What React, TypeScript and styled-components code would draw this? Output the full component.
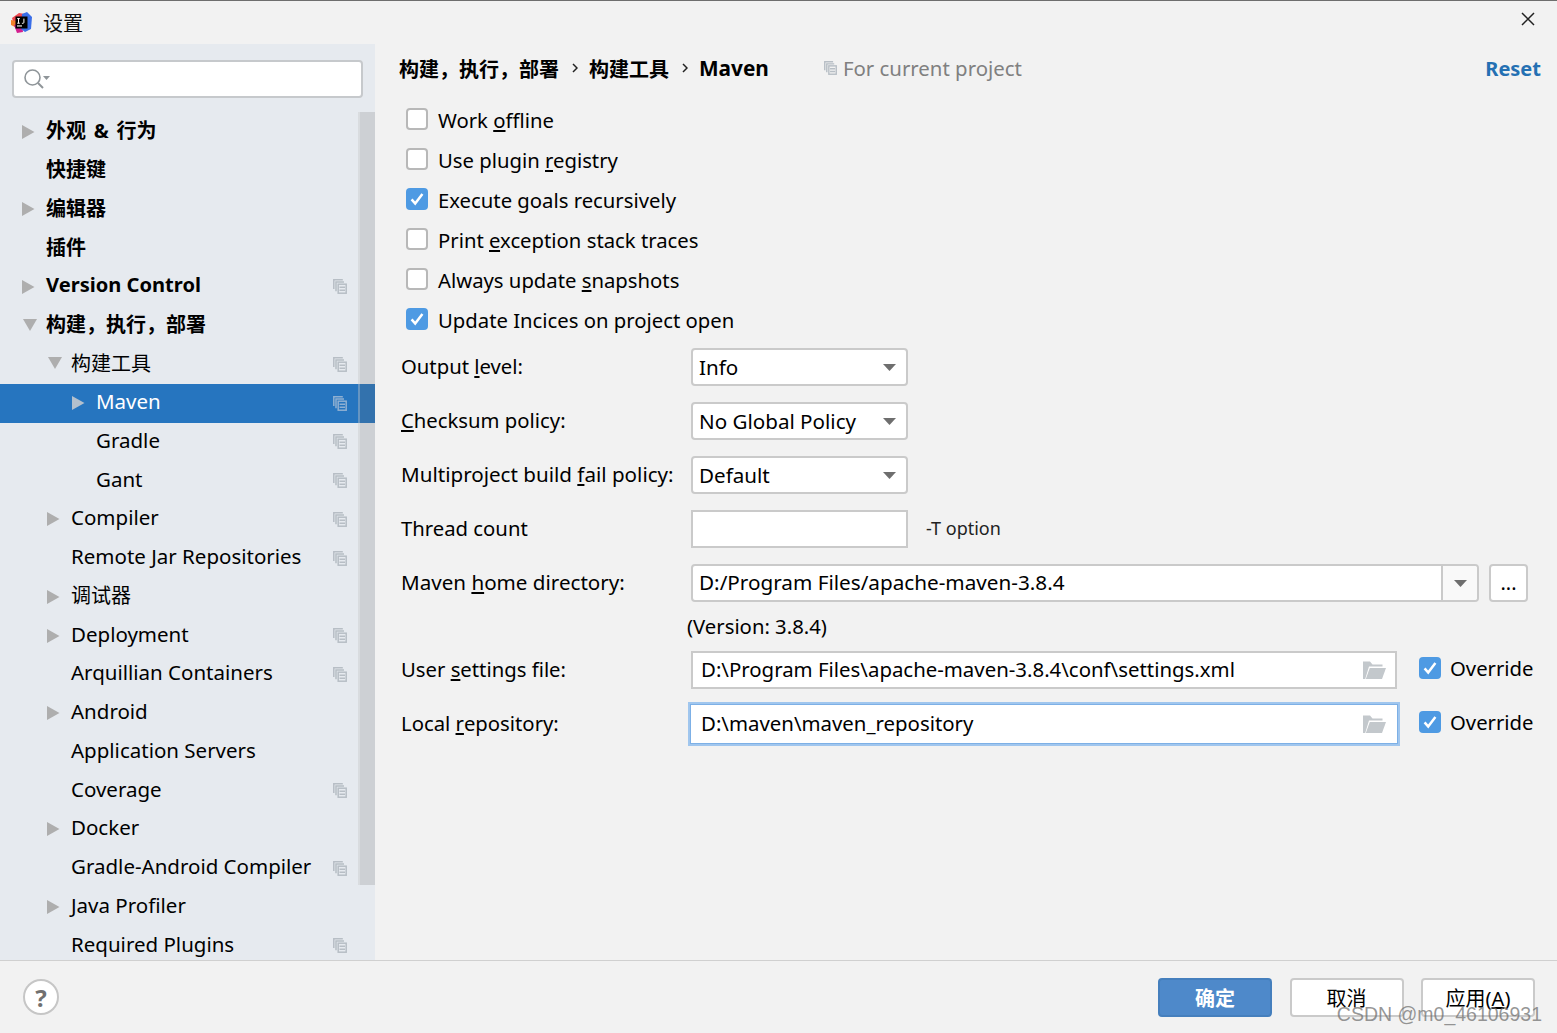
import React from "react";
import styled, { createGlobalStyle } from "styled-components";

const FONT = `"Noto Sans", "Noto Sans CJK SC", sans-serif`;

const Global = createGlobalStyle`
  html, body { margin: 0; padding: 0; height: 1033px; overflow: hidden; background: #f2f2f2; }
  * { box-sizing: border-box; }
  body { font-family: ${FONT}; color: #000; }
`;

const Window = styled.div`
  position: relative;
  width: 1557px;
  height: 1033px;
  display: flex;
  flex-direction: column;
  background: #f2f2f2;
  border-top: 1px solid #6e6e6e;
  overflow: hidden;
  font-size: 20.3px;
`;

const TitleBar = styled.div`
  height: 43px;
  flex: none;
  display: flex;
  align-items: center;
  padding: 0 22px 0 11px;
`;
const TitleText = styled.span`
  margin-left: 11px;
  font-size: 20px;
  color: #111;
`;
const CloseButton = styled.span`
  margin-left: auto;
  display: flex;
  margin-bottom: 8px;
`;

const Body = styled.div`
  flex: 1;
  min-height: 0;
  display: flex;
`;

const Sidebar = styled.aside`
  position: relative;
  width: 375px;
  flex: none;
  background: #e6eaef;
  padding-top: 16px;
  overflow: hidden;
  display: flex;
  flex-direction: column;
`;
const SearchBox = styled.div`
  flex: none;
  margin: 0 12px 14.6px;
  height: 38px;
  background: #fff;
  border: 2px solid #c6c9cc;
  border-radius: 4px;
  display: flex;
  align-items: center;
  padding-left: 9px;
`;
const Tree = styled.div`
  display: flex;
  flex-direction: column;
`;
const Row = styled.div<{ $depth: number; $selected?: boolean; $bold?: boolean; $cjk?: boolean }>`
  height: 38.75px;
  flex: none;
  display: flex;
  align-items: center;
  padding-left: ${(p) => 22 + p.$depth * 25}px;
  padding-right: 28px;
  background: ${(p) => (p.$selected ? "#2675bf" : "transparent")};
  color: ${(p) => (p.$selected ? "#fff" : "#000")};
  font-weight: ${(p) => (p.$bold ? 700 : 400)};
  font-size: ${(p) => (p.$cjk ? 20 : p.$bold ? 20.1 : 20.5)}px;
  word-spacing: ${(p) => (p.$cjk ? 2.5 : 0)}px;
  white-space: nowrap;
`;
const ArrowSlot = styled.span`
  width: 24px;
  flex: none;
  display: flex;
  align-items: center;
`;
const RowLabel = styled.span`
  flex: 1;
  min-width: 0;
  padding-bottom: 4px;
`;
const Scrollbar = styled.div`
  position: absolute;
  right: 0;
  top: 68px;
  width: 17px;
  height: 773px;
  background: rgba(105, 105, 105, 0.2);
  border-left: 2px solid rgba(255, 255, 255, 0.25);
`;

const Main = styled.main`
  flex: 1;
  min-width: 0;
  padding: 0 16px 0 24px;
  display: flex;
  flex-direction: column;
`;
const Breadcrumb = styled.div`
  height: 48px;
  flex: none;
  display: flex;
  align-items: center;
  font-weight: 700;
  font-size: 20px;
`;
const CrumbSep = styled.span`
  display: flex;
  margin: 0 11px 0 13px;
`;
const CrumbLeaf = styled.span`
  font-size: 20.8px;
`;
const ProjectHint = styled.span`
  margin-left: 55px;
  display: flex;
  align-items: center;
  gap: 6px;
  font-weight: 400;
  font-size: 20.4px;
  color: #808080;
`;
const ResetLink = styled.span`
  margin-left: auto;
  color: #2470b3;
  font-weight: 700;
  font-size: 20px;
`;

const Options = styled.div`
  flex: none;
  margin-top: 7px;
  padding-left: 7px;
  display: flex;
  flex-direction: column;
`;
const OptionRow = styled.label`
  height: 40px;
  display: flex;
  align-items: center;
  gap: 10px;
`;
const OptionText = styled.span`
  padding-top: 2px;
`;
const Box = styled.span<{ $checked?: boolean }>`
  width: 22px;
  height: 22px;
  flex: none;
  border-radius: 4px;
  display: flex;
  align-items: center;
  justify-content: center;
  background: ${(p) => (p.$checked ? "#4e9ae3" : "#fff")};
  border: ${(p) => (p.$checked ? "none" : "2px solid #b8b8b8")};
`;

const Form = styled.div`
  margin-top: 1px;
  padding-left: 2px;
  display: grid;
  grid-template-columns: 290px 1fr;
  align-items: center;
`;
const FormLabel = styled.span<{ $wide?: boolean }>`
  height: 54px;
  display: flex;
  align-items: center;
  white-space: pre;
  padding-bottom: 2px;
  font-size: ${(p) => (p.$wide ? 20.6 : 20.3)}px;
`;
const FormCell = styled.div`
  height: 54px;
  display: flex;
  align-items: center;
`;
const VersionCell = styled.div`
  grid-column: 2;
  height: 33px;
  margin-left: -4px;
  padding-bottom: 2px;
  display: flex;
  align-items: center;
`;
const Combo = styled.div`
  width: 217px;
  height: 38px;
  background: #fff;
  border: 2px solid #cacaca;
  border-radius: 4px;
  display: flex;
  align-items: center;
  padding: 0 10px 0 6px;
  justify-content: space-between;
  font-size: 20.6px;
`;
const TextInput = styled.div`
  width: 217px;
  height: 38px;
  background: #fff;
  border: 2px solid #cacaca;
`;
const HintText = styled.span`
  margin-left: 18px;
  padding-bottom: 2px;
  font-size: 18px;
  color: #222;
`;
const PathCombo = styled.div`
  width: 788px;
  height: 38px;
  background: #fff;
  border: 2px solid #cacaca;
  border-radius: 4px;
  display: flex;
  align-items: center;
  padding-left: 6px;
`;
const PathValue = styled.span`
  flex: 1;
  padding-bottom: 2px;
  font-size: 20.7px;
`;
const PathArrow = styled.span`
  width: 36px;
  height: 100%;
  background: #f9f9f9;
  border-left: 2px solid #cacaca;
  border-radius: 0 3px 3px 0;
  display: flex;
  align-items: center;
  justify-content: center;
`;
const EllipsisButton = styled.button`
  width: 39px;
  height: 38px;
  margin-left: 10px;
  padding: 0 0 1px;
  background: #fff;
  border: 2px solid #cacaca;
  border-radius: 4px;
  font: inherit;
  font-size: 20px;
  color: #000;
`;
const FileField = styled.div<{ $focused?: boolean }>`
  width: 706px;
  height: 38px;
  background: #fff;
  border: ${(p) => (p.$focused ? "none" : "2px solid #cacaca")};
  box-shadow: ${(p) => (p.$focused ? "0 0 0 1px #7db0e6, 0 0 0 3px #a0c6ee" : "none")};
  display: flex;
  align-items: center;
  padding: 0 ${(p) => (p.$focused ? 11 : 9)}px 0 ${(p) => (p.$focused ? 10 : 8)}px;
`;
const FileValue = styled.span`
  flex: 1;
  padding-bottom: 2px;
  font-size: 20.4px;
`;
const OverrideLabel = styled.label`
  margin-left: 22px;
  display: flex;
  align-items: center;
  gap: 9px;
  margin-top: -5px;
`;

const Footer = styled.footer`
  height: 73px;
  flex: none;
  border-top: 1px solid #d0d0d0;
  display: flex;
  align-items: center;
  padding: 0 22px 0 23px;
`;
const HelpButton = styled.span`
  width: 36px;
  height: 36px;
  border-radius: 50%;
  background: #fff;
  border: 2px solid #c6c6c6;
  display: flex;
  align-items: center;
  justify-content: center;
  color: #707070;
  font-weight: 700;
  font-size: 24px;
`;
const FooterActions = styled.div`
  margin-left: auto;
  display: flex;
  gap: 17.5px;
`;
const DialogButton = styled.button<{ $primary?: boolean }>`
  width: 114px;
  height: 39px;
  padding: 0;
  border-radius: 4px;
  font-family: ${FONT};
  font-size: 20px;
  font-weight: ${(p) => (p.$primary ? 700 : 400)};
  color: ${(p) => (p.$primary ? "#fff" : "#000")};
  background: ${(p) => (p.$primary ? "#4e89ca" : "#fff")};
  border: 2px solid ${(p) => (p.$primary ? "#457fbd" : "#cacaca")};
`;
const Watermark = styled.span`
  position: absolute;
  right: 15px;
  bottom: 7px;
  font-family: "Liberation Sans", sans-serif;
  font-size: 19.5px;
  color: rgba(110, 110, 110, 0.72);
`;

const Arrow = ({ open, selected }: { open?: boolean; selected?: boolean }) => (
  <svg width="16" height="14" viewBox="0 0 16 14" aria-hidden>
    <path d={open ? "M1 0h14L8 12z" : "M0 0v14l12.5-7z"} fill={selected ? "#b3c0cd" : "#aeaeae"} />
  </svg>
);

const CopyIcon = ({ size = 14, selected }: { size?: number; selected?: boolean }) => {
  const c = selected ? "#8fb0d2" : "#b7bec5";
  return (
    <svg width={size} height={size + 1} viewBox="0 0 14 15" fill="none" stroke={c} strokeWidth="1.5" aria-hidden>
      <path d="M.8 10V.8h9" />
      <path d="M3 12.2V3h8" />
      <rect x="5.2" y="5.2" width="8" height="9" />
      <path d="M6.5 8.3h5.5M6.5 11.2h5.5" />
    </svg>
  );
};

const Check = () => (
  <svg width="16" height="16" viewBox="0 0 16 16" fill="none" aria-hidden>
    <path d="M2.6 8.4l3.6 4.2L13.4 3" stroke="#fff" strokeWidth="2.5" />
  </svg>
);

const DownTriangle = () => (
  <svg width="13" height="7" viewBox="0 0 13 7" aria-hidden>
    <path d="M0 0h13L6.5 7z" fill="#6e6e6e" />
  </svg>
);

const ChevronSep = () => (
  <svg width="6" height="10" viewBox="0 0 6 10" fill="none" aria-hidden>
    <path d="M1 1l4 4-4 4" stroke="#222" strokeWidth="1.5" />
  </svg>
);

const FolderIcon = () => (
  <svg width="24" height="20" viewBox="0 0 24 20" aria-hidden>
    <path d="M1 19V1.5h7l2.5 3h10v2H7L3.2 19z" fill="#c3c8cc" />
    <path d="M7.8 8H24l-4 11H3.8z" fill="#c3c8cc" />
  </svg>
);

const Logo = () => (
  <svg width="21" height="21" viewBox="0 0 21 21" aria-hidden>
    <path d="M1 6l7-5 6 1-2 10-9 1z" fill="#f0474f" />
    <path d="M0 8l5 1-1 6-4-2z" fill="#f5822a" />
    <path d="M3 13l8-2 1 9-6 1z" fill="#d31f8f" />
    <path d="M11 2l5-2 5 5-1 12-6 3-4-3z" fill="#3a6ee8" />
    <rect x="4.5" y="4.5" width="12" height="12" fill="#000" />
    <rect x="6" y="13.4" width="5" height="1.1" fill="#fff" />
    <path d="M6.2 6.6h2.6M7.5 6.6v4.6M6.2 11.2h2.6M12.9 6.6v3.8q0 .9-1 .9h-1" stroke="#fff" strokeWidth="1" fill="none" />
  </svg>
);

type Item = { label: string; depth: number; arrow?: "open" | "closed"; bold?: boolean; copy?: boolean; selected?: boolean; cjk?: boolean };

const items: Item[] = [
  { label: "外观 & 行为", depth: 0, arrow: "closed", bold: true, cjk: true },
  { label: "快捷键", depth: 0, bold: true, cjk: true },
  { label: "编辑器", depth: 0, arrow: "closed", bold: true, cjk: true },
  { label: "插件", depth: 0, bold: true, cjk: true },
  { label: "Version Control", depth: 0, arrow: "closed", bold: true, copy: true },
  { label: "构建，执行，部署", depth: 0, arrow: "open", bold: true, cjk: true },
  { label: "构建工具", depth: 1, arrow: "open", copy: true, cjk: true },
  { label: "Maven", depth: 2, arrow: "closed", copy: true, selected: true },
  { label: "Gradle", depth: 2, copy: true },
  { label: "Gant", depth: 2, copy: true },
  { label: "Compiler", depth: 1, arrow: "closed", copy: true },
  { label: "Remote Jar Repositories", depth: 1, copy: true },
  { label: "调试器", depth: 1, arrow: "closed", cjk: true },
  { label: "Deployment", depth: 1, arrow: "closed", copy: true },
  { label: "Arquillian Containers", depth: 1, copy: true },
  { label: "Android", depth: 1, arrow: "closed" },
  { label: "Application Servers", depth: 1 },
  { label: "Coverage", depth: 1, copy: true },
  { label: "Docker", depth: 1, arrow: "closed" },
  { label: "Gradle-Android Compiler", depth: 1, copy: true },
  { label: "Java Profiler", depth: 1, arrow: "closed" },
  { label: "Required Plugins", depth: 1, copy: true },
];

const options: { node: React.ReactNode; checked?: boolean }[] = [
  { node: <>Work <u>o</u>ffline</> },
  { node: <>Use plugin <u>r</u>egistry</> },
  { node: <>Execute <u>g</u>oals recursively</>, checked: true },
  { node: <>Print <u>e</u>xception stack traces</> },
  { node: <>Always update <u>s</u>napshots</> },
  { node: <>Update Incices on project open</>, checked: true },
];

export default function App() {
  return (
    <Window>
      <Global />
      <TitleBar>
        <Logo />
        <TitleText>设置</TitleText>
        <CloseButton>
          <svg width="14" height="14" viewBox="0 0 14 14" aria-hidden>
            <path d="M1 1l12 12M13 1L1 13" stroke="#222" strokeWidth="1.5" />
          </svg>
        </CloseButton>
      </TitleBar>
      <Body>
        <Sidebar>
          <SearchBox>
            <svg width="27" height="22" viewBox="0 0 27 22" fill="none" aria-hidden>
              <circle cx="9.5" cy="9.5" r="7.5" stroke="#8f9599" strokeWidth="1.6" />
              <path d="M15 15l5 5" stroke="#8f9599" strokeWidth="2" />
              <path d="M20 8h7l-3.5 4z" fill="#8f9599" />
            </svg>
          </SearchBox>
          <Tree>
            {items.map((it) => (
              <Row key={it.label} $depth={it.depth} $bold={it.bold} $selected={it.selected} $cjk={it.cjk}>
                <ArrowSlot>{it.arrow && <Arrow open={it.arrow === "open"} selected={it.selected} />}</ArrowSlot>
                <RowLabel>{it.label}</RowLabel>
                {it.copy && <CopyIcon selected={it.selected} />}
              </Row>
            ))}
          </Tree>
          <Scrollbar />
        </Sidebar>
        <Main>
          <Breadcrumb>
            构建，执行，部署
            <CrumbSep><ChevronSep /></CrumbSep>
            构建工具
            <CrumbSep><ChevronSep /></CrumbSep>
            <CrumbLeaf>Maven</CrumbLeaf>
            <ProjectHint>
              <CopyIcon size={13} />
              For current project
            </ProjectHint>
            <ResetLink>Reset</ResetLink>
          </Breadcrumb>
          <Options>
            {options.map((o, i) => (
              <OptionRow key={i}>
                <Box $checked={o.checked}>{o.checked && <Check />}</Box>
                <OptionText>{o.node}</OptionText>
              </OptionRow>
            ))}
          </Options>
          <Form>
            <FormLabel>Output <u>l</u>evel:</FormLabel>
            <FormCell>
              <Combo>Info<DownTriangle /></Combo>
            </FormCell>
            <FormLabel><u>C</u>hecksum policy:</FormLabel>
            <FormCell>
              <Combo>No Global Policy<DownTriangle /></Combo>
            </FormCell>
            <FormLabel $wide>Multiproject build <u>f</u>ail policy:</FormLabel>
            <FormCell>
              <Combo>Default<DownTriangle /></Combo>
            </FormCell>
            <FormLabel>Thread count</FormLabel>
            <FormCell>
              <TextInput />
              <HintText>-T option</HintText>
            </FormCell>
            <FormLabel $wide>Maven <u>h</u>ome directory:</FormLabel>
            <FormCell>
              <PathCombo>
                <PathValue>D:/Program Files/apache-maven-3.8.4</PathValue>
                <PathArrow><DownTriangle /></PathArrow>
              </PathCombo>
              <EllipsisButton>...</EllipsisButton>
            </FormCell>
            <VersionCell>(Version: 3.8.4)</VersionCell>
            <FormLabel>User <u>s</u>ettings file:</FormLabel>
            <FormCell>
              <FileField>
                <FileValue>D:\Program Files\apache-maven-3.8.4\conf\settings.xml</FileValue>
                <FolderIcon />
              </FileField>
              <OverrideLabel>
                <Box $checked><Check /></Box>
                Override
              </OverrideLabel>
            </FormCell>
            <FormLabel>Local <u>r</u>epository:</FormLabel>
            <FormCell>
              <FileField $focused>
                <FileValue>D:\maven\maven_repository</FileValue>
                <FolderIcon />
              </FileField>
              <OverrideLabel>
                <Box $checked><Check /></Box>
                Override
              </OverrideLabel>
            </FormCell>
          </Form>
        </Main>
      </Body>
      <Footer>
        <HelpButton>?</HelpButton>
        <FooterActions>
          <DialogButton $primary>确定</DialogButton>
          <DialogButton>取消</DialogButton>
          <DialogButton>应用(<u>A</u>)</DialogButton>
        </FooterActions>
      </Footer>
      <Watermark>CSDN @m0_46106931</Watermark>
    </Window>
  );
}
